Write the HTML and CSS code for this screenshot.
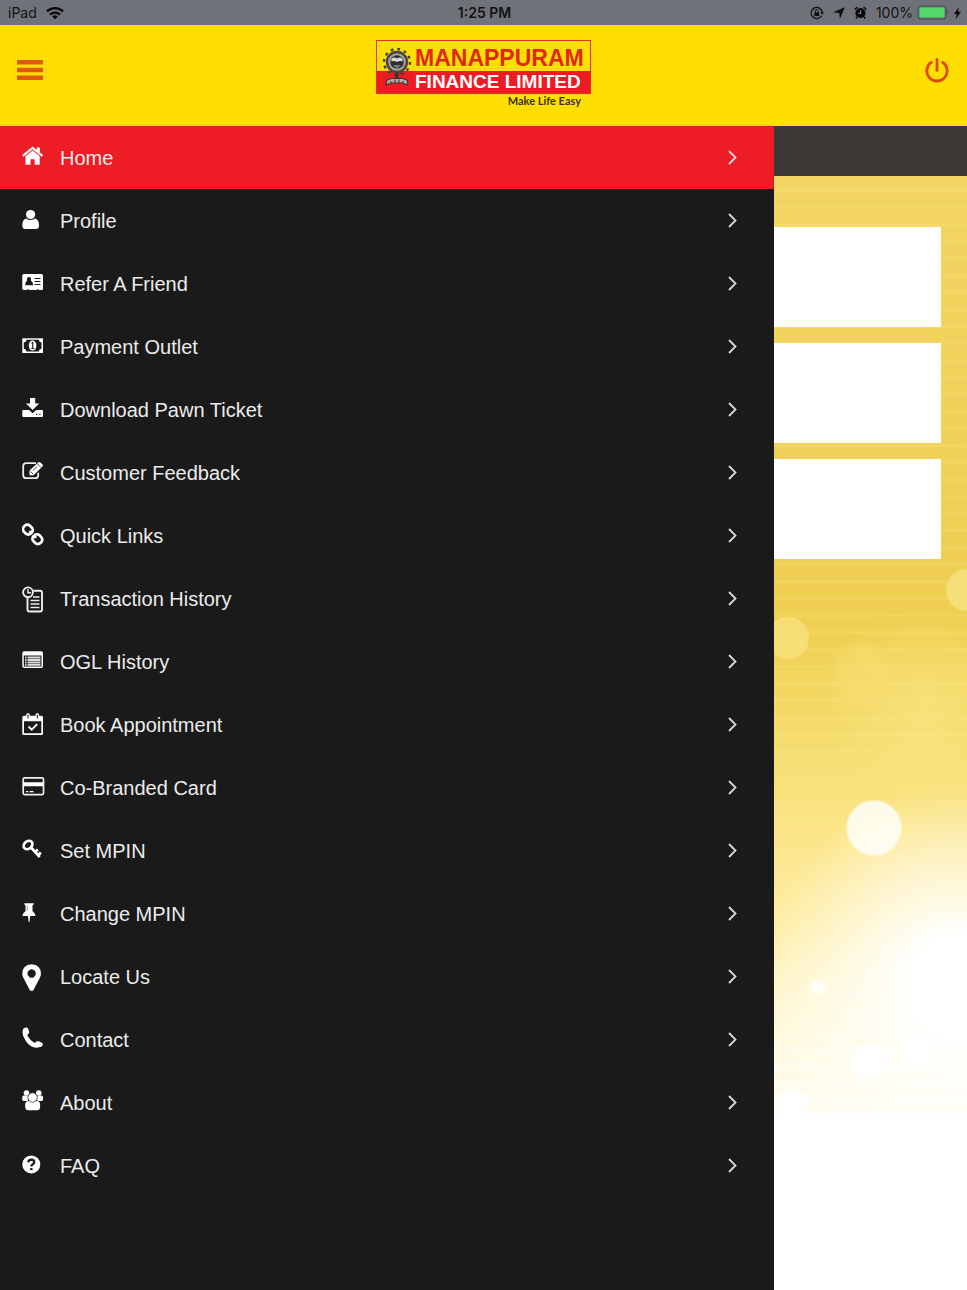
FILE: index.html
```
<!DOCTYPE html>
<html lang="en">
<head>
    <meta charset="UTF-8">
    <meta name="viewport" content="width=device-width, initial-scale=1">
    <title>Manappuram Finance Limited</title>
    <link rel="stylesheet" href="styles.css">
</head>
<body>
<div class="status-bar">
    <div class="status-left">
        <span>iPad</span>
        <svg width="18" height="14" viewBox="0 0 18 14" fill="none" stroke="#08080a" stroke-width="2.4">
            <path d="M1 5.4a11.4 11.4 0 0 1 16 0"/>
            <path d="M4 8.6a7.2 7.2 0 0 1 10 0"/>
            <path d="M9 13.2 6.2 10.6a4 4 0 0 1 5.6 0z" fill="#08080a" stroke="none"/>
        </svg>
    </div>
    <div class="status-time">1:25 PM</div>
    <div class="status-right">
        <svg width="14" height="14" viewBox="0 0 14 14" fill="none" stroke="#111215">
            <path d="M11.6 9.8a5.6 5.6 0 1 1 .7-3.4" stroke-width="1.3"/>
            <path d="m10.3 6.3 1.9 2.4 1.7-2.6z" fill="#111215" stroke="none"/>
            <path d="M4.3 6.4h4.9v3.7H4.3z" fill="#111215" stroke="none"/>
            <path d="M5.3 6.5V5.1a1.4 1.4 0 0 1 2.9 0v1.4"/>
        </svg>
        <svg width="12" height="12" viewBox="0 0 12 12" fill="#08080a"><path d="M11.8.3 6.9 11.8 6.3 6 .4 5.2z"/></svg>
        <svg width="13" height="13" viewBox="0 0 13 13">
            <circle cx="6.5" cy="7" r="5.1" fill="#08080a"/>
            <path d="M.9 3.6a7 7 0 0 1 2.5-2.5M9.6 1.1a7 7 0 0 1 2.5 2.5M3 11l-1 1.5M10 11l1 1.5" stroke="#08080a" stroke-width="1.5"/>
            <path d="M6.500 4.500v3h-2.300" fill="none" stroke="#8a8c93" stroke-width="1.1"/>
        </svg>
        <span class="status-percent">100%</span>
        <svg width="33" height="15" viewBox="0 0 33 15">
            <rect x="1" y="1" width="28" height="13" rx="2.5" fill="none" stroke="#44484c"/>
            <rect x="2.500" y="2.500" width="25" height="10" rx="1" fill="#53d769"/>
            <path d="M30.5 5.5q2 2 0 4z" fill="#44484c"/>
        </svg>
        <svg width="7" height="12" viewBox="0 0 7 12" fill="#08080a"><path d="M4.8 0 0 6.9h2.8L1.8 12 7 4.8H4z"/></svg>
    </div>
</div>

<header class="header">
    <button type="button" class="header-button" aria-label="Menu">
        <svg width="26" height="20" viewBox="0 0 26 20" fill="#e05a0c"><path d="M0 0h26v4.600H0zM0 7.700h26v4.600H0zM0 15.400h26V20H0z"/></svg>
    </button>
    <div class="logo">
        <div class="logo-box">
            <svg class="emblem" width="30" height="40" viewBox="0 0 30 40">
                <circle cx="15" cy="15" r="13" fill="none" stroke="#4a4033" stroke-width="2.4" stroke-dasharray="2.8 4"/>
                <circle cx="15" cy="15" r="10" fill="#a9a6a0" stroke="#4a453f" stroke-width="2.400"/>
                <circle cx="15" cy="15" r="6.800" fill="#312f34"/>
                <path d="M9.500 11.500q2.700-2 5.500 0 2.800-2 5.500 0v3q-2.700-1-5.500.6-2.800-1.600-5.500-.6z" fill="#d7d7da"/>
                <path d="M11 18h8l-4 4z" fill="#77767a"/>
                <path d="M13.500 26h3v6h-3z" fill="#35302d"/>
                <path d="M5 33q5-2.500 10-1.500 5-1 10 1.500l1 5q-6-3-11-2-5-1-11 2z" fill="#b8a9a2" stroke="#3a2a28"/>
                <path d="m8 34 2 2m3-3.500v3m4-3v3m5-1.500-2 2" stroke="#3a2a28"/>
            </svg>
            <div class="logo-name">MANAPPURAM</div>
            <div class="logo-type">FINANCE LIMITED</div>
        </div>
        <div class="tagline">Make Life Easy</div>
    </div>
    <button type="button" class="header-button power" aria-label="Log out">
        <svg width="25" height="25" viewBox="0 0 25 25" fill="none" stroke="#dc4a0b" stroke-width="2.800" stroke-linecap="round">
            <path d="M12 1.400v11M6.200 4.400a10.200 10.200 0 1 0 11.600 0"/>
        </svg>
    </button>
</header>

<div class="content">
    <nav class="menu">
        <a href="#" class="menu-item active">
            <svg class="icon" viewBox="0 -1 24 29"><path d="m.8 11.800 9.800-8 9.800 8" fill="none" stroke="#fff" stroke-width="2.200"/><path d="M14.800 3.500h3.200v5l-3.200-2.500zM3.500 12.300l7.100-5.800 7.100 5.800v8.400h-5v-5.500H8.500v5.500h-5z"/></svg>
            <span>Home</span>
            <svg class="chevron" viewBox="0 0 9 15"><path d="m1 1 6.500 6.500L1 14"/></svg>
        </a>
        <a href="#" class="menu-item">
            <svg class="icon" viewBox="0 -1 24 29"><circle cx="8.600" cy="7.500" r="4.600"/><path d="M4.200 11.500q4.400 3.200 8.800 0 4 1 4 7 0 3.500-3 3.500H3.300q-3 0-3-3.500 0-6 3.900-7z"/></svg>
            <span>Profile</span>
            <svg class="chevron" viewBox="0 0 9 15"><path d="m1 1 6.500 6.500L1 14"/></svg>
        </a>
        <a href="#" class="menu-item">
            <svg class="icon" viewBox="0 -1 24 29"><rect x=".3" y="4" width="20.700" height="16" rx="1.500"/><path class="cut" d="M5 8q2-2 4 0v3q2 .5 2 4.200H3.300q0-3.700 1.700-4.200zM5 19.200h1.500v.8H5zM15 19.200h1.500v.8H15z"/><path d="M12.500 8.500h6M12.500 11.500h6M12.500 14.500h6" stroke="#1a1a1a"/></svg>
            <span>Refer A Friend</span>
            <svg class="chevron" viewBox="0 0 9 15"><path d="m1 1 6.500 6.500L1 14"/></svg>
        </a>
        <a href="#" class="menu-item">
            <svg class="icon" viewBox="0 -1 24 29"><path d="M.3 5.300H21V20H.3z"/><path class="cut" d="M4.500 6.800h12.300q.2 2.500 2.700 2.700v6.300q-2.500.2-2.700 2.700H4.500q-.2-2.500-2.700-2.700V9.500q2.500-.2 2.700-2.700z"/><ellipse cx="10.600" cy="12.600" rx="3.800" ry="5"/><path class="cut" d="m9 10.500 1.300-1.500h1v6h1v1H9.300v-1h.9v-4.500z"/></svg>
            <span>Payment Outlet</span>
            <svg class="chevron" viewBox="0 0 9 15"><path d="m1 1 6.500 6.500L1 14"/></svg>
        </a>
        <a href="#" class="menu-item">
            <svg class="icon" viewBox="0 -1 24 29"><path d="M8 2h5.200v5.500h4L10.600 14 4 7.500h4z"/><path d="M1.300 14H7l3.600 3.200 3.600-3.200H20q1 0 1 1v5q0 1-1 1H1.300q-1 0-1-1v-5q0-1 1-1z"/><path class="cut" d="M14 17.700h1.200v1.200H14zM17.300 17.700h1.200v1.200h-1.200z"/></svg>
            <span>Download Pawn Ticket</span>
            <svg class="chevron" viewBox="0 0 9 15"><path d="m1 1 6.500 6.500L1 14"/></svg>
        </a>
        <a href="#" class="menu-item">
            <svg class="icon" viewBox="0 -1 24 29"><path d="M14 4.200H4.200q-3 0-3 3v9q0 3 3 3h9q3 0 3-3v-2.500" fill="none" stroke="#eee" stroke-width="1.800"/><path d="m7.500 11.500 9-8.300q1-.7 2 .2l2 2q.9 1 0 2l-9 8.800h-4z"/><path d="m15.300 4.800 3.700 3.700M8.500 12.500l2.500 2.500M11 11.500l4.200-4" stroke="#1a1a1a" stroke-width=".8"/></svg>
            <span>Customer Feedback</span>
            <svg class="chevron" viewBox="0 0 9 15"><path d="m1 1 6.500 6.500L1 14"/></svg>
        </a>
        <a href="#" class="menu-item">
            <svg class="icon" viewBox="0 -1 24 29" stroke="#fff" stroke-width="2.700"><g transform="rotate(45 10.600 12.400)" fill="none"><rect x="-1" y="8.200" width="9.700" height="8.400" rx="3.600"/><rect x="12.500" y="8.200" width="9.700" height="8.400" rx="3.600"/><path d="M6 12.400h3.500M12 12.400h3.500"/></g></svg>
            <span>Quick Links</span>
            <svg class="chevron" viewBox="0 0 9 15"><path d="m1 1 6.500 6.500L1 14"/></svg>
        </a>
        <a href="#" class="menu-item">
            <svg class="icon" viewBox="0 -1 24 29" stroke="#eee" stroke-width="1.900"><g fill="none"><path d="M11.500 5.700H18q2 0 2 2v16.800q0 2-2 2H7.500q-2 0-2-2V13"/><circle cx="6" cy="7.300" r="4.900"/><path d="M6 4.300v3.400h3M11 12h6.500M8.500 15.500h9M8.500 19h9M8.500 22.500h9" stroke-width="1.500"/></g></svg>
            <span>Transaction History</span>
            <svg class="chevron" viewBox="0 0 9 15"><path d="m1 1 6.500 6.500L1 14"/></svg>
        </a>
        <a href="#" class="menu-item">
            <svg class="icon" viewBox="0 -1 24 29"><rect x=".3" y="3.300" width="20.700" height="16.700" rx="2"/><path class="cut" d="M1.800 7.500h17.700v11H1.800z"/><path d="M3 9.500h1.500M5.500 9.500h13M3 12h1.500M5.500 12h13M3 14.500h1.500M5.500 14.500h13M3 16.800h1.500M5.500 16.800h13" stroke="#ddd" stroke-width="1.800"/></svg>
            <span>OGL History</span>
            <svg class="chevron" viewBox="0 0 9 15"><path d="m1 1 6.500 6.500L1 14"/></svg>
        </a>
        <a href="#" class="menu-item">
            <svg class="icon" viewBox="0 -1 24 29"><path d="M2 4.700h2q0-2.700 2-2.700t2 2.700h5.300q0-2.700 2-2.700t2 2.700h2q1.700 0 1.700 1.700v16q0 1.600-1.700 1.600H2Q.3 24 .3 22.400v-16Q.3 4.700 2 4.700z"/><path class="cut" d="M2 10.200h17.300v12.100H2zM5.500 3.500h1v4h-1zM14.800 3.500h1v4h-1z"/><path d="m6.500 15.500 3.200 3.200 5.500-5.500" fill="none" stroke="#fff" stroke-width="1.900"/></svg>
            <span>Book Appointment</span>
            <svg class="chevron" viewBox="0 0 9 15"><path d="m1 1 6.500 6.500L1 14"/></svg>
        </a>
        <a href="#" class="menu-item">
            <svg class="icon" viewBox="0 -1 24 29"><rect x="1.200" y="3.800" width="20.300" height="16.800" rx="1.500" fill="none" stroke="#eee" stroke-width="1.700"/><path d="M1 8.200h20.500v4H1zM4 17h2.200v1.300H4zM7.500 17h4v1.300h-4z"/></svg>
            <span>Co-Branded Card</span>
            <svg class="chevron" viewBox="0 0 9 15"><path d="m1 1 6.500 6.500L1 14"/></svg>
        </a>
        <a href="#" class="menu-item">
            <svg class="icon" viewBox="0 -1 24 29"><g fill="none" stroke="#fff" stroke-width="2.700"><ellipse cx="6" cy="8" rx="4.800" ry="3.700" transform="rotate(-42 6 8)"/><path d="m9 10.500 8.800 9.500M13.300 15l2.500-2.500M16.300 18l2.500-2.500"/></g></svg>
            <span>Set MPIN</span>
            <svg class="chevron" viewBox="0 0 9 15"><path d="m1 1 6.500 6.500L1 14"/></svg>
        </a>
        <a href="#" class="menu-item">
            <svg class="icon" viewBox="0 -1 24 29"><path d="M2.300 3.300h9.400q.5 1.700-1.200 1.900v6q2.800 1.500 3 4.800H8.200L7.500 22h-.8L6 16H.4q.2-3.300 3.100-4.800v-6q-1.700-.2-1.200-1.900z"/><path d="M5.300 5.800v5" stroke="#999"/></svg>
            <span>Change MPIN</span>
            <svg class="chevron" viewBox="0 0 9 15"><path d="m1 1 6.500 6.500L1 14"/></svg>
        </a>
        <a href="#" class="menu-item">
            <svg class="icon" viewBox="0 -1 24 29"><path fill-rule="evenodd" d="M9.600 1.300q9.300.6 9.300 9.400 0 1.800-.8 3.500l-6.500 12.600q-2 2.400-4 0L1.100 14.200Q.3 12.500.3 10.700.3 1.900 9.600 1.300zm0 5a4.200 4.200 0 1 0 .1 0z"/></svg>
            <span>Locate Us</span>
            <svg class="chevron" viewBox="0 0 9 15"><path d="m1 1 6.500 6.500L1 14"/></svg>
        </a>
        <a href="#" class="menu-item">
            <svg class="icon" viewBox="0 -1 24 29"><path d="M1.500 2.500q2-1.300 3.700-1 2 2.500 2 5-.2 1.300-2 2.500 2.500 5.300 7.700 8 1.500-2 2.600-2.100 2.500.2 5.400 2.500.2 1.500-1 3.200Q10 24.500 3.500 14.500-1.300 7 1.500 2.500z"/></svg>
            <span>Contact</span>
            <svg class="chevron" viewBox="0 0 9 15"><path d="m1 1 6.500 6.500L1 14"/></svg>
        </a>
        <a href="#" class="menu-item">
            <svg class="icon" viewBox="0 -1 24 29"><circle cx="4.500" cy="4" r="2.800"/><circle cx="16.800" cy="4" r="2.800"/><rect x=".3" y="6.500" width="6" height="5.500" rx="1.500"/><rect x="15" y="6.500" width="6" height="5.500" rx="1.500"/><rect x="3.200" y="12" width="14.900" height="9.300" rx="3.500"/><circle cx="10.600" cy="8.500" r="4.700" stroke="#1a1a1a" stroke-width=".7"/></svg>
            <span>About</span>
            <svg class="chevron" viewBox="0 0 9 15"><path d="m1 1 6.500 6.500L1 14"/></svg>
        </a>
        <a href="#" class="menu-item">
            <svg class="icon" viewBox="0 -1 24 29"><circle cx="9.300" cy="12.400" r="9"/><path d="M6.300 10.300q.2-2.700 3-2.700 3 .1 3 2.500 0 1.200-1.500 2.100-1.400.8-1.400 2.300" fill="none" stroke="#1a1a1a" stroke-width="2.200"/><path class="cut" d="M8.200 16h2.300v2.200H8.200z"/></svg>
            <span>FAQ</span>
            <svg class="chevron" viewBox="0 0 9 15"><path d="m1 1 6.500 6.500L1 14"/></svg>
        </a>
    </nav>
    <main class="page">
        <div class="title-bar"></div>
        <div class="cards">
            <div class="card"></div>
            <div class="card"></div>
            <div class="card"></div>
        </div>
    </main>
</div>
</body>
</html>
```
FILE: styles.css
```
* {
    box-sizing: border-box;
}

body {
    margin: 0;
    min-height: 100vh;
    display: flex;
    flex-direction: column;
    font-family: "Liberation Sans", Arial, sans-serif;
    background: #fff;
}

svg {
    display: block;
    flex: none;
}

/* status bar */
.status-bar {
    display: grid;
    grid-template-columns: 1fr auto 1fr;
    align-items: center;
    height: 25px;
    padding: 0 6px 0 8px;
    background: #707279;
    color: #111215;
    font-family: Inter, sans-serif;
    font-size: 14px;
}

.status-left,
.status-right {
    display: flex;
    align-items: center;
    gap: 9px;
}

.status-right {
    justify-content: flex-end;
}

.status-percent {
    margin-right: -5px;
}

.status-right svg:last-child {
    margin-left: -5px;
}

.status-time {
    font-weight: 600;
}

/* header */
.header {
    display: flex;
    justify-content: space-between;
    align-items: flex-start;
    height: 101px;
    padding: 15px 17px;
    background: #ffdf03;
}

.header-button {
    display: flex;
    align-items: center;
    width: 40px;
    height: 60px;
    padding: 0;
    border: 0;
    background: none;
    cursor: pointer;
}

.header-button.power {
    justify-content: flex-end;
}

.logo-box {
    display: grid;
    grid-template-columns: 38px auto;
    grid-template-rows: 30px 22px;
    align-items: center;
    width: 215px;
    border: 1px solid #e5331c;
    background: linear-gradient(#ffdf03 30px, #ed1c24 30px);
    font-weight: bold;
    white-space: nowrap;
}

.emblem {
    grid-row: 1 / 3;
    margin-left: 5px;
}

.logo-name {
    padding-top: 5px;
    color: #e0280f;
    font-size: 23px;
    line-height: 25px;
}

.logo-type {
    color: #fff;
    font-size: 19px;
    line-height: 22px;
}

.tagline {
    padding-right: 10px;
    color: #3a3205;
    font-family: Lato, sans-serif;
    font-size: 11px;
    font-weight: bold;
    line-height: 14px;
    text-align: right;
}

/* side menu */
.content {
    flex: 1;
    display: grid;
    grid-template-columns: 4fr 1fr;
}

.menu {
    background: #1a1a1a;
}

.menu-item {
    display: flex;
    align-items: center;
    height: 63px;
    padding: 0 37px 0 22px;
    color: #ececec;
    font-size: 20px;
    text-decoration: none;
}

.menu-item span {
    padding-top: 2px;
}

.menu-item.active {
    background: #ee1c25;
}

.icon {
    width: 24px;
    height: 29px;
    margin-right: 14px;
    fill: #fff;
}

.icon .cut {
    fill: #1a1a1a;
}

.chevron {
    width: 9px;
    height: 15px;
    margin-left: auto;
    fill: none;
    stroke: #d8d8d8;
    stroke-width: 1.8;
}

/* page behind the menu */
.page {
    display: flex;
    flex-direction: column;
}

.title-bar {
    height: 50px;
    background: #3d3835;
}

.cards {
    flex: 1;
    display: flex;
    flex-direction: column;
    gap: 16px;
    padding: 51px 26px 51px 0;
    background:
        radial-gradient(circle at 14px 462px, rgba(250, 228, 130, 0.7) 20px, transparent 22px),
        radial-gradient(circle at 193px 414px, rgba(250, 230, 135, 0.7) 20px, transparent 22px),
        radial-gradient(circle at 86px 497px, rgba(250, 225, 120, 0.35) 22px, transparent 34px),
        radial-gradient(circle at 100px 652px, rgba(255, 255, 250, 0.85) 26px, transparent 29px),
        radial-gradient(circle at 44px 811px, rgba(255, 255, 250, 0.8) 6px, transparent 10px),
        radial-gradient(circle at 95px 885px, #fff 14px, transparent 19px),
        radial-gradient(circle at 144px 874px, #fff 14px, transparent 20px),
        radial-gradient(circle at 18px 928px, #fff 12px, transparent 19px),
        radial-gradient(circle at 186px 809px, #fff 50px, rgba(255, 255, 255, 0.8) 75px, rgba(255, 255, 255, 0) 200px),
        radial-gradient(circle at 150px 530px, rgba(255, 238, 150, 0.4), transparent 100px),
        repeating-linear-gradient(transparent 0, transparent 12px, rgba(255, 240, 160, 0.18) 15px, transparent 17px),
        linear-gradient(#f2d563 0, #efce53 390px, #efcf51 450px, #f3d864 530px, #f8e17a 610px, #fce78f 680px, #feeea4 750px, #fff6cd 820px, #fffbe6 880px, #fffdf4 937px);
    background-size: 100% 938px;
    background-repeat: no-repeat;
}

.card {
    height: 100px;
    background: #fff;
}
```
